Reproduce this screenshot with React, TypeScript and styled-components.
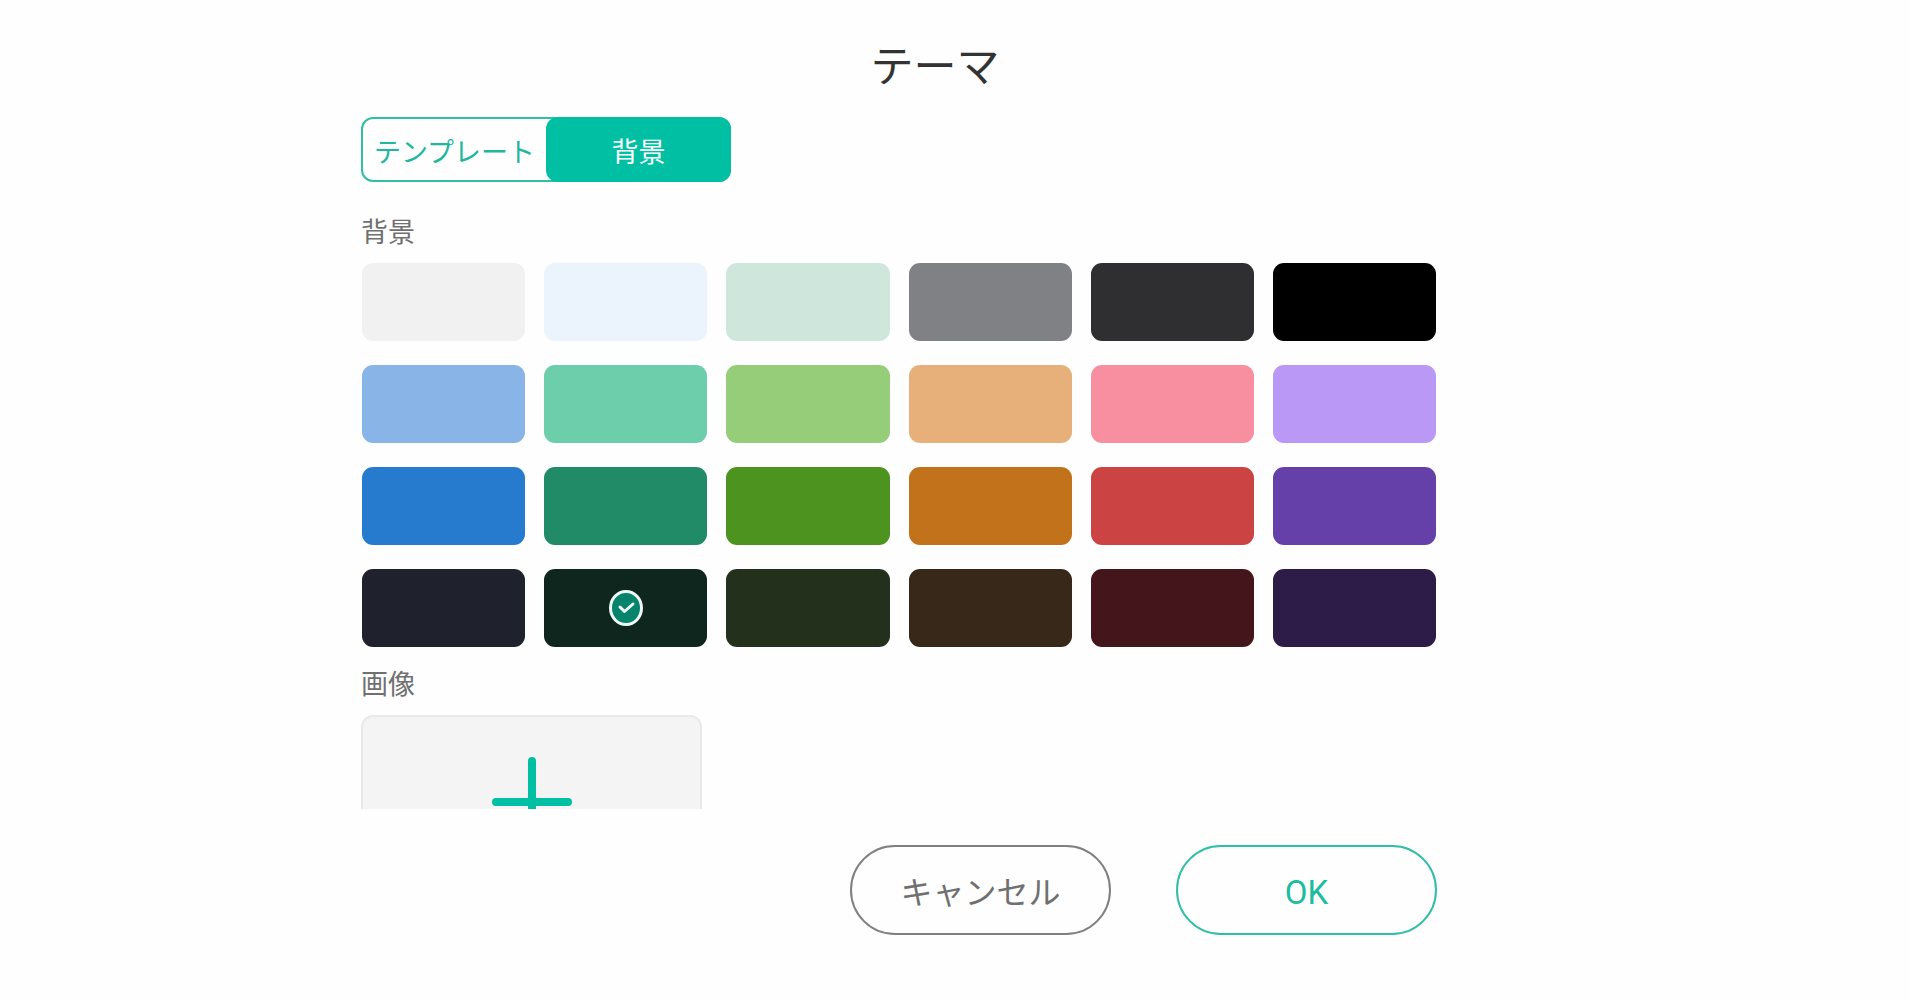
import React, { useState } from "react";
import styled, { createGlobalStyle } from "styled-components";

const GlobalStyle = createGlobalStyle`
  *, *::before, *::after { box-sizing: border-box; }
  body {
    margin: 0;
    background: #fefefe;
    font-family: "Noto Sans CJK JP", sans-serif;
  }
  button { font-family: inherit; cursor: pointer; }
`;

const accent = "#00bfa2";

const Dialog = styled.main`
  display: flex;
  flex-direction: column;
  height: 100vh;
  margin: 0 328px 0 288px;
  padding: 32px 0 65px;
`;

const Title = styled.h1`
  margin: 0;
  color: #333;
  font-size: 43px;
  font-weight: 400;
  line-height: 62px;
  text-align: center;
`;

const ScrollArea = styled.div`
  flex: 1;
  min-height: 0;
  overflow-y: auto;
  scrollbar-width: none;
  margin: 23px 145px 0 73px;
`;

const Tabs = styled.div`
  display: grid;
  grid-template-columns: 1fr 1fr;
  width: 370px;
  border: 2px solid #2fbfa6;
  border-radius: 12px;
`;

const Tab = styled.button<{ $active: boolean }>`
  height: ${(p) => (p.$active ? "65px" : "61px")};
  margin: ${(p) => (p.$active ? "-2px" : "0")};
  padding: 2px 0 0;
  border: 0;
  border-radius: 12px;
  background: ${(p) => (p.$active ? accent : "transparent")};
  color: ${(p) => (p.$active ? "#fff" : "#1fb79e")};
  font-size: 27px;
  line-height: 40px;
  white-space: nowrap;

  &:last-child { margin-left: 0; }
`;

const Section = styled.section<{ $space: number }>`
  padding-top: ${(p) => p.$space}px;
`;

const SectionTitle = styled.h2`
  margin: 0 0 12px;
  color: #707070;
  font-size: 27px;
  font-weight: 400;
  line-height: 40px;
`;

const Swatches = styled.div`
  display: grid;
  grid-template-columns: repeat(6, 1fr);
  gap: 24px 19px;
  padding: 0 1px;
`;

const Swatch = styled.label`
  display: grid;
  place-items: center;
  cursor: pointer;

  & > * { grid-area: 1 / 1; }
`;

const SwatchInput = styled.input<{ $color: string }>`
  appearance: none;
  width: 100%;
  height: 78px;
  margin: 0;
  border-radius: 11px;
  background: ${(p) => p.$color};
  cursor: pointer;
`;

const CheckMark = styled.svg`
  width: 36px;
  height: 36px;
  pointer-events: none;
`;

const AddImage = styled.button`
  display: flex;
  justify-content: center;
  width: 341px;
  height: 180px;
  padding: 40px 0 0;
  border: 2px solid #e9e9e9;
  border-radius: 12px;
  background: #f4f4f4;
`;

const Footer = styled.footer`
  display: flex;
  justify-content: flex-end;
  gap: 65px;
  margin: 36px 145px 0 73px;
`;

const PillButton = styled.button<{ $primary?: boolean }>`
  width: 261px;
  height: 90px;
  padding: ${(p) => (p.$primary ? 6 : 0)}px 0 0;
  border: 2px solid ${(p) => (p.$primary ? "#2fbfa6" : "#808080")};
  border-radius: 45px;
  background: transparent;
  color: ${(p) => (p.$primary ? "#1cbca0" : "#707070")};
  font-family: ${(p) => (p.$primary ? "Roboto, sans-serif" : "inherit")};
  font-size: ${(p) => (p.$primary ? 33 : 32)}px;
  line-height: 48px;
`;

const colors: [string, string][] = [
  ["ライトグレー", "#f1f1f1"], ["ペールブルー", "#ebf3fc"], ["ペールグリーン", "#cfe6dd"],
  ["グレー", "#808185"], ["ダークグレー", "#2f2f31"], ["ブラック", "#000000"],
  ["ライトブルー", "#89b4e8"], ["ミント", "#6dceac"], ["ライトグリーン", "#96cd78"],
  ["ライトオレンジ", "#e7b07a"], ["ピンク", "#f78fa0"], ["ラベンダー", "#ba98f6"],
  ["ブルー", "#277bce"], ["エメラルド", "#218a66"], ["グリーン", "#4d931f"],
  ["オレンジ", "#c1721b"], ["レッド", "#cb4443"], ["パープル", "#6440a8"],
  ["ダークネイビー", "#1f222d"], ["ダークエメラルド", "#0f261e"], ["ダークグリーン", "#23301b"],
  ["ダークブラウン", "#382819"], ["ダークレッド", "#44161c"], ["ダークパープル", "#2d1c48"],
];

export default function App() {
  const [tab, setTab] = useState("背景");
  const [selected, setSelected] = useState("#0f261e");

  return (
    <>
      <GlobalStyle />
      <Dialog>
        <Title>テーマ</Title>
        <ScrollArea>
          <Tabs role="tablist">
            {["テンプレート", "背景"].map((name) => (
              <Tab
                key={name}
                type="button"
                role="tab"
                aria-selected={tab === name}
                $active={tab === name}
                onClick={() => setTab(name)}
              >
                {name}
              </Tab>
            ))}
          </Tabs>
          <Section $space={29}>
            <SectionTitle>背景</SectionTitle>
            <Swatches role="radiogroup" aria-label="背景">
              {colors.map(([name, color]) => (
                <Swatch key={color}>
                  <SwatchInput
                    type="radio"
                    name="background"
                    aria-label={name}
                    $color={color}
                    checked={selected === color}
                    onChange={() => setSelected(color)}
                  />
                  {selected === color && (
                    <CheckMark viewBox="0 0 36 36" aria-hidden="true">
                      <ellipse cx="18" cy="18" rx="15.5" ry="16.5" fill="#05836b" stroke="#eef8f5" strokeWidth="3" />
                      <path
                        d="M12 17 L16.5 21.5 L25 14"
                        fill="none"
                        stroke="#eef8f5"
                        strokeWidth="3"
                        strokeLinecap="round"
                        strokeLinejoin="round"
                      />
                    </CheckMark>
                  )}
                </Swatch>
              ))}
            </Swatches>
          </Section>
          <Section $space={16}>
            <SectionTitle>画像</SectionTitle>
            <AddImage type="button" aria-label="画像を追加">
              <svg width="80" height="90" viewBox="0 0 80 90" aria-hidden="true">
                <path d="M40 4V86M4 45H76" stroke={accent} strokeWidth="8" strokeLinecap="round" />
              </svg>
            </AddImage>
          </Section>
        </ScrollArea>
        <Footer>
          <PillButton type="button">キャンセル</PillButton>
          <PillButton type="button" $primary>OK</PillButton>
        </Footer>
      </Dialog>
    </>
  );
}
